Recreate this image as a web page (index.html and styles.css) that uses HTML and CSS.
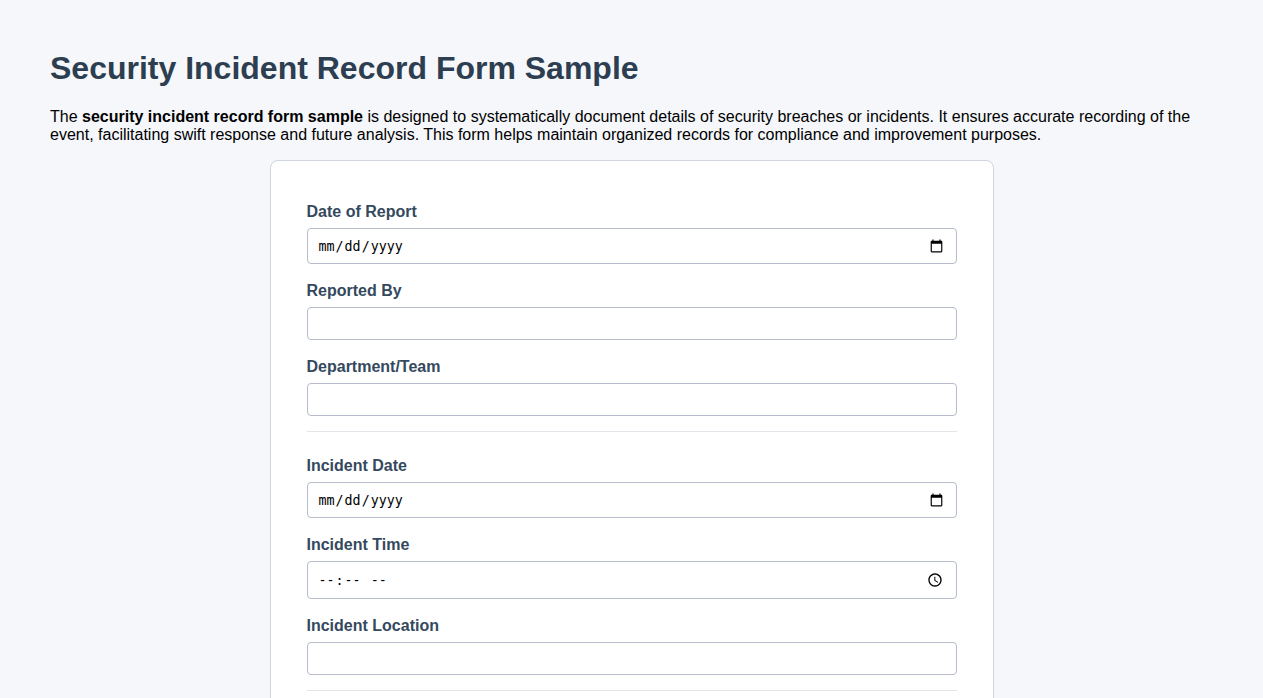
FILE: index.html
```html
<!DOCTYPE html>
<html lang="en">
<head>
  <meta charset="UTF-8">
  <title>Security Incident Record Form Sample</title>
  <link rel="stylesheet" href="styles.css">
</head>
<body>

  <h1>Security Incident Record Form Sample</h1>
  <p>The <b>security incident record form sample</b> is designed to systematically document details of security breaches or incidents. It ensures accurate recording of the event, facilitating swift response and future analysis. This form helps maintain organized records for compliance and improvement purposes.</p>

  <form class="incident-form">
    <label for="report-date">Date of Report</label>
    <input type="date" id="report-date" name="report-date">

    <label for="reported-by">Reported By</label>
    <input type="text" id="reported-by" name="reported-by">

    <label for="department">Department/Team</label>
    <input type="text" id="department" name="department">

    <div class="divider"></div>

    <label for="incident-date">Incident Date</label>
    <input type="date" id="incident-date" name="incident-date">

    <label for="incident-time">Incident Time</label>
    <input type="time" id="incident-time" name="incident-time">

    <label for="incident-location">Incident Location</label>
    <input type="text" id="incident-location" name="incident-location">

    <div class="divider"></div>
  </form>

</body>
</html>
```
FILE: styles.css
```css
body {
  font-family: Arial, "Liberation Sans", sans-serif;
  background: #f5f7fb;
  margin: 0;
  padding: 29px 50px;
}
h1 {
  color: #2c3e50;
  margin: 21px 0;
}
.incident-form {
  background: #fff;
  max-width: 650px;
  margin: 0 auto;
  padding: 24px 36px;
  border: 1px solid #cfd4de;
  border-radius: 8px;
}
label {
  display: block;
  margin: 18px 0 7px;
  color: #34495e;
  font-weight: bold;
}
input {
  display: block;
  width: 100%;
  height: 33px;
  box-sizing: border-box;
  padding: 8px 10px;
  border: 1px solid #b6bccb;
  border-radius: 4px;
}
input[type="date"] {
  height: 36px;
}
input[type="time"] {
  height: 38px;
}
input[type="date"]::-webkit-calendar-picker-indicator {
  width: 15px;
  height: 15px;
}
input[type="time"]::-webkit-calendar-picker-indicator {
  width: 16px;
  height: 16px;
}
.divider {
  margin: 15px 0 25px;
  border-bottom: 1px solid #e3e5ea;
}
```
